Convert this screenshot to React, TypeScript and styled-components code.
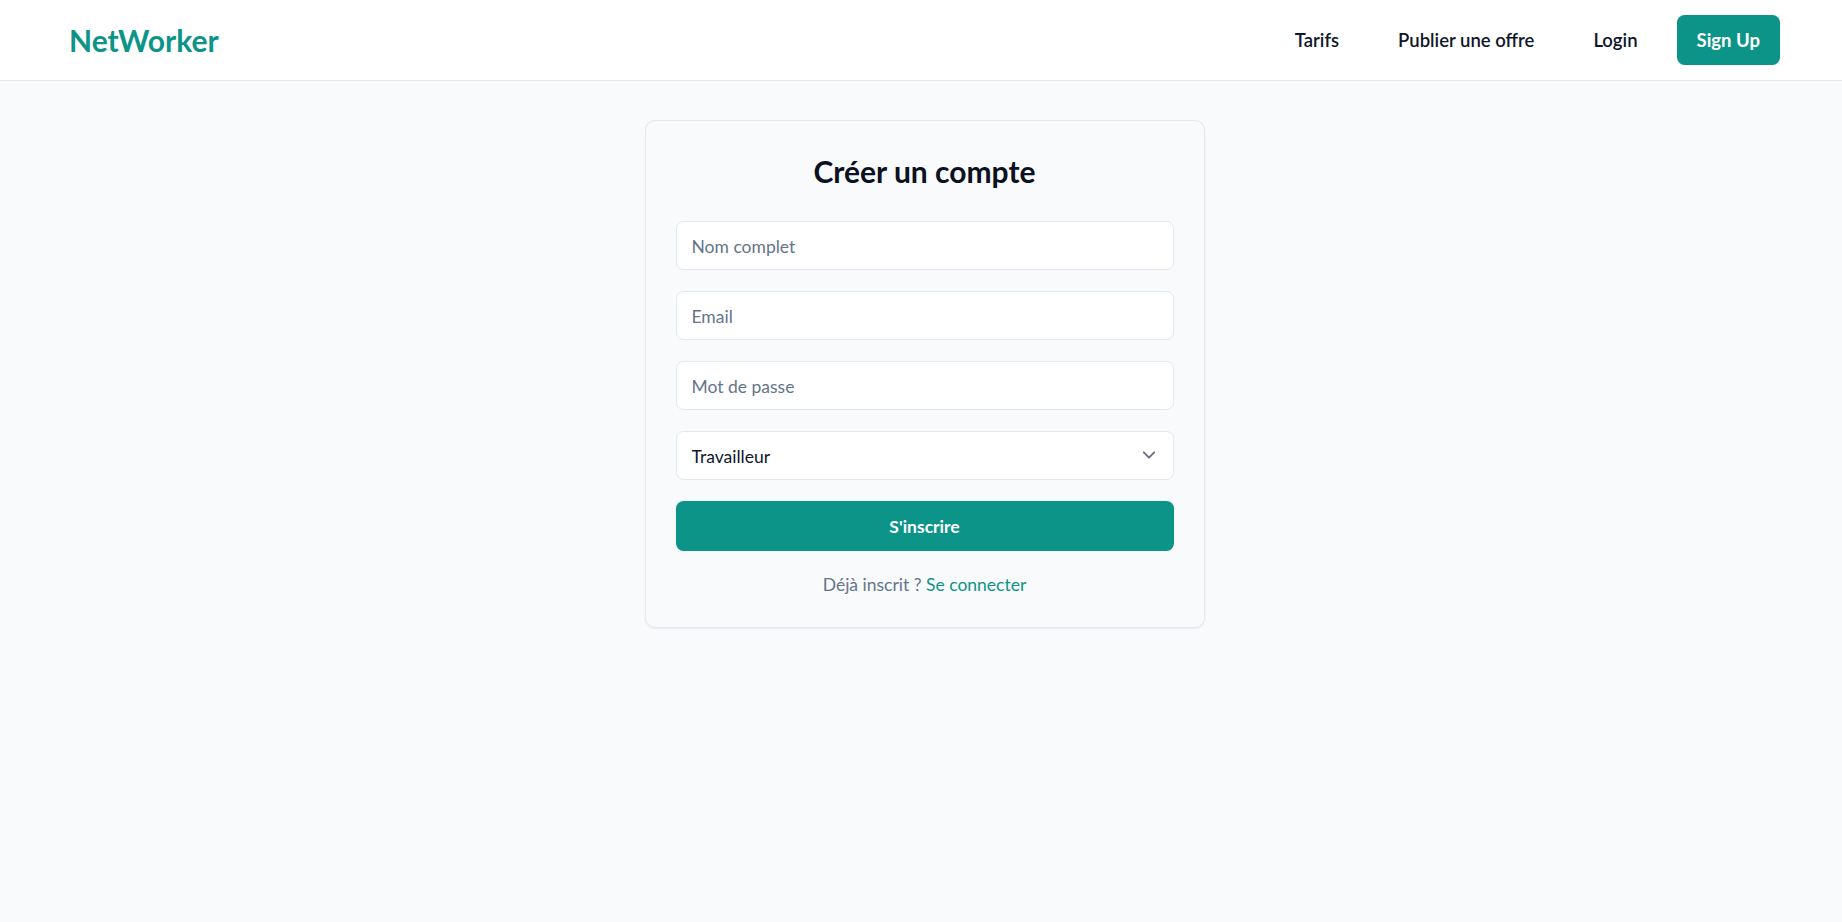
import styled, { createGlobalStyle } from 'styled-components';

const GlobalStyle = createGlobalStyle`
  html, body {
    margin: 0;
    padding: 0;
    background: #f8fafc;
    font-family: 'Lato', 'Noto Sans', sans-serif;
    color: #0f172a;
  }
  * {
    box-sizing: border-box;
  }
`;

const Page = styled.div`
  min-height: 100vh;
  background: #f8fafc;
`;

const Header = styled.header`
  height: 81px;
  background: #ffffff;
  border-bottom: 1px solid #e2e8f0;
  display: flex;
  align-items: center;
  justify-content: space-between;
  padding: 0 62px 0 69px;
`;

const Logo = styled.a`
  font-size: 30px;
  font-weight: 700;
  color: #0d9488;
  text-decoration: none;
`;

const Nav = styled.nav`
  display: flex;
  align-items: center;
  gap: 19px;
`;

const NavLink = styled.a`
  padding: 0 20px;
  font-size: 18.5px;
  font-weight: 600;
  color: #0f172a;
  text-decoration: none;
`;

const SignUpButton = styled.a`
  height: 50px;
  display: flex;
  align-items: center;
  padding: 0 20px;
  border-radius: 7.5px;
  background: #0d9488;
  color: #ffffff;
  font-size: 18.5px;
  font-weight: 700;
  text-decoration: none;
`;

const Main = styled.main`
  display: flex;
  justify-content: center;
  padding: 39px 0 0 7px;
`;

const Card = styled.div`
  width: 560px;
  padding: 30px;
  border: 1px solid #e2e8f0;
  border-radius: 10px;
  background: #f8fafc;
  box-shadow: 0 1px 2px rgba(15, 23, 42, 0.06);
`;

const Title = styled.h1`
  margin: 0 0 30px;
  font-size: 30px;
  line-height: 40px;
  font-weight: 700;
  text-align: center;
  color: #0b1120;
`;

const Form = styled.form`
  display: flex;
  flex-direction: column;
  gap: 21px;
`;

const fieldBase = `
  width: 100%;
  height: 49px;
  padding: 1px 15px 0;
  border: 1px solid #e2e8f0;
  border-radius: 7.5px;
  background: #ffffff;
  font-family: 'Lato', 'Noto Sans', sans-serif;
  font-size: 17.5px;
  color: #0f172a;
  outline: none;
`;

const Input = styled.input`
  ${fieldBase}
  &::placeholder {
    color: #64748b;
  }
`;

const SelectWrap = styled.div`
  position: relative;
`;

const Select = styled.select`
  ${fieldBase}
  padding-top: 2px;
  appearance: none;
  -webkit-appearance: none;
`;

const Chevron = styled.svg`
  position: absolute;
  right: 12px;
  top: 11px;
  width: 26px;
  height: 26px;
  pointer-events: none;
`;

const SubmitButton = styled.button`
  height: 50px;
  border: none;
  border-radius: 7.5px;
  background: #0d9488;
  color: #ffffff;
  font-family: 'Lato', 'Noto Sans', sans-serif;
  font-size: 17.5px;
  font-weight: 700;
  cursor: pointer;
`;

const Footer = styled.p`
  margin: 21px 0 0;
  font-size: 17.5px;
  line-height: 25px;
  text-align: center;
  color: #64748b;
`;

const FooterLink = styled.a`
  color: #0d9488;
  text-decoration: none;
`;

export default function App() {
  return (
    <Page>
      <GlobalStyle />
      <Header>
        <Logo href="#">NetWorker</Logo>
        <Nav>
          <NavLink href="#">Tarifs</NavLink>
          <NavLink href="#">Publier une offre</NavLink>
          <NavLink href="#">Login</NavLink>
          <SignUpButton href="#">Sign Up</SignUpButton>
        </Nav>
      </Header>
      <Main>
        <Card>
          <Title>Créer un compte</Title>
          <Form onSubmit={(e) => e.preventDefault()}>
            <Input type="text" placeholder="Nom complet" />
            <Input type="email" placeholder="Email" />
            <Input type="password" placeholder="Mot de passe" />
            <SelectWrap>
              <Select defaultValue="Travailleur">
                <option value="Travailleur">Travailleur</option>
                <option value="Employeur">Employeur</option>
              </Select>
              <Chevron viewBox="0 0 20 20" fill="none">
                <path d="M6 8l4 4 4-4" stroke="#6b7280" strokeWidth="1.5" strokeLinecap="round" strokeLinejoin="round" />
              </Chevron>
            </SelectWrap>
            <SubmitButton type="submit">S'inscrire</SubmitButton>
          </Form>
          <Footer>
            Déjà inscrit ? <FooterLink href="#">Se connecter</FooterLink>
          </Footer>
        </Card>
      </Main>
    </Page>
  );
}
